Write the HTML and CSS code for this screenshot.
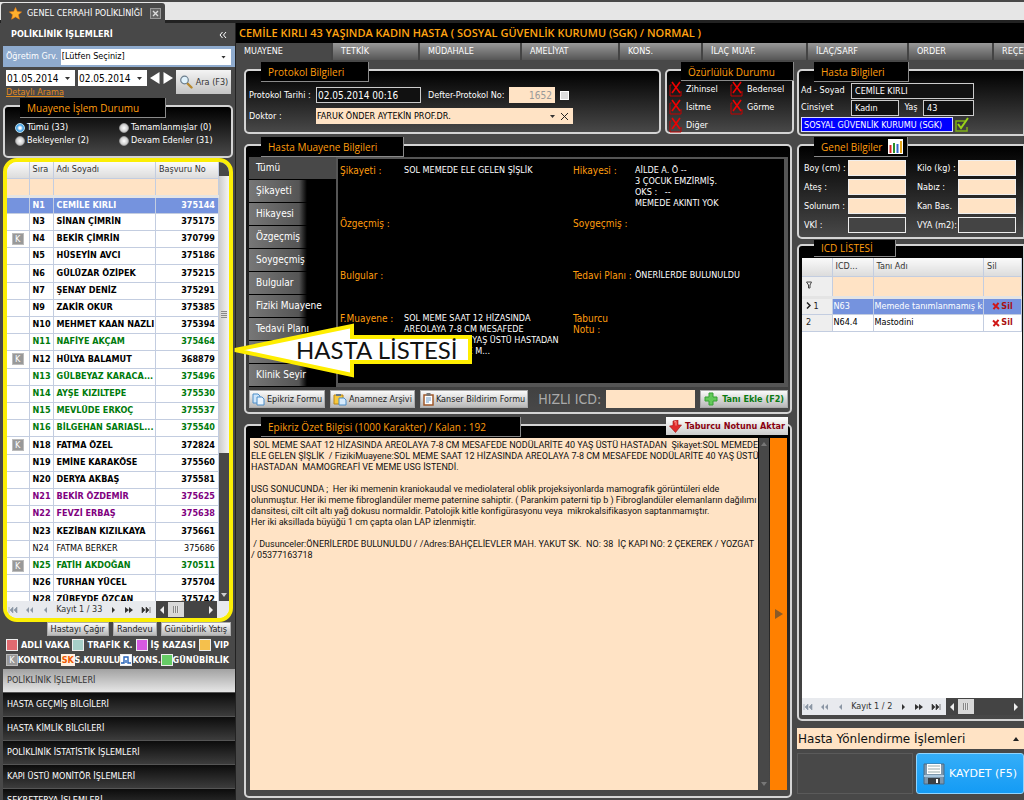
FILE: index.html
```html
<!DOCTYPE html>
<html lang="tr">
<head>
<meta charset="utf-8">
<title>Genel Cerrahi Polikliniği</title>
<link rel="stylesheet" href="styles.css">
</head>
<body>
<svg class="defs" width="0" height="0" aria-hidden="true">
  <symbol id="nofill" viewBox="0 0 14 16"><path d="M2.500 4H1v11h11v-5" fill="none" stroke="#c40000" stroke-width="1"/><path d="M3 1l8 11M11 1L3 12" stroke="#f00000" stroke-width="1.600" fill="none"/></symbol>
  <symbol id="first" viewBox="0 0 10 8"><path d="M1 1v6M5 1L2 4l3 3zM9 1L6 4l3 3z" fill="currentColor" stroke="currentColor" stroke-width=".6"/></symbol>
  <symbol id="prevs" viewBox="0 0 10 8"><path d="M5 1L2 4l3 3zM9 1L6 4l3 3z" fill="currentColor"/></symbol>
  <symbol id="prev" viewBox="0 0 10 8"><path d="M6 1L3 4l3 3z" fill="currentColor"/></symbol>
  <symbol id="next" viewBox="0 0 10 8"><path d="M4 1l3 3-3 3z" fill="currentColor"/></symbol>
  <symbol id="nexts" viewBox="0 0 10 8"><path d="M1 1l4 3-4 3zM5 1l4 3-4 3z" fill="currentColor"/></symbol>
  <symbol id="last" viewBox="0 0 10 8"><path d="M9 1v6M1 1l3 3-3 3zM5 1l3 3-3 3z" fill="currentColor" stroke="currentColor" stroke-width=".6"/></symbol>
  <symbol id="left" viewBox="0 0 6 8"><path d="M5 0v8L1 4z" fill="currentColor"/></symbol>
  <symbol id="rightw" viewBox="0 0 6 8"><path d="M1 0v8l4-4z" fill="currentColor"/></symbol>
  <symbol id="del" viewBox="0 0 8 8"><path d="M1 1.500l6 5.500M6.500 .8L1.500 7.200" stroke="#d01818" stroke-width="2" fill="none"/></symbol>
</svg>
<div class="app">
  <header class="doc-tabs">
    <div class="doc-tab">
      <svg width="13" height="13" viewBox="0 0 13 13"><path d="M6.500.5l1.800 4 4.300.4-3.200 2.900 1 4.400-3.900-2.300-3.900 2.300 1-4.400L.4 4.900l4.300-.4z" fill="#ffb02e" stroke="#f08010" stroke-width=".6"/></svg>
      <span>GENEL CERRAHİ POLİKLİNİĞİ</span>
      <button class="close" aria-label="Kapat"><svg width="7" height="7" viewBox="0 0 7 7"><path d="M1 1l5 5M6 1L1 6" stroke="#ddd" stroke-width="1.400"/></svg></button>
    </div>
  </header>

  <aside class="side">
    <div class="side-head"><h1>POLİKLİNİK İŞLEMLERİ</h1><button class="plain" aria-label="Daralt"><svg width="8" height="8" viewBox="0 0 8 8"><path d="M3.500 1L1 4l2.500 3M7 1L4.500 4 7 7" stroke="#fff" fill="none"/></svg></button></div>
    <div class="group-row"><label for="grp">Öğretim Grv.</label><span class="combo grow"><select id="grp" class="sel"><option>[Lütfen Seçiniz]</option></select></span></div>
    <div class="dates">
      <div class="date-left">
        <div class="date-row">
          <span class="combo small"><select class="sel" aria-label="Başlangıç"><option>01.05.2014</option></select></span>
          <span class="combo small"><select class="sel" aria-label="Bitiş"><option>02.05.2014</option></select></span>
          <button class="plain" aria-label="Önceki"><svg width="10" height="12" viewBox="0 0 10 12"><path d="M9.500 0v12L0 6z" fill="#fff"/></svg></button>
          <button class="plain" aria-label="Sonraki"><svg width="10" height="12" viewBox="0 0 10 12"><path d="M.5 0v12L10 6z" fill="#fff"/></svg></button>
        </div>
        <a class="more" href="#">Detaylı Arama</a>
      </div>
      <button class="search"><svg width="14" height="14" viewBox="0 0 14 14"><path d="M8 8l4.500 4.500" stroke="#b88a30" stroke-width="2.400" stroke-linecap="round"/><circle cx="5.500" cy="5" r="3.800" fill="#dff1fb" stroke="#6d7f8e" stroke-width="1.200"/></svg>Ara (F3)</button>
    </div>
    <section class="frame status">
      <h2 class="cap">Muayene İşlem Durumu</h2>
      <div class="radios">
        <label><input type="radio" name="st" checked>Tümü (33)</label>
        <label><input type="radio" name="st">Tamamlanmışlar (0)</label>
        <label><input type="radio" name="st">Bekleyenler (2)</label>
        <label><input type="radio" name="st">Devam Edenler (31)</label>
      </div>
    </section>
    <section class="patients">
      <div class="list">
        <div class="list-scroll">
        <table class="grid">
          <colgroup><col class="c-k"><col class="c-s"><col><col class="c-b"></colgroup>
          <thead>
            <tr><th></th><th>Sıra</th><th>Adı Soyadı</th><th>Başvuru No</th></tr>
            <tr class="filter"><td></td><td></td><td></td><td></td></tr>
          </thead>
          <tbody>
            <tr class="on"><td></td><td>N1</td><td>CEMİLE KIRLI</td><td>375144</td></tr>
            <tr><td></td><td>N3</td><td>SİNAN ÇİMRİN</td><td>375175</td></tr>
            <tr><td><i class="k">K</i></td><td>N4</td><td>BEKİR ÇİMRİN</td><td>370799</td></tr>
            <tr><td></td><td>N5</td><td>HÜSEYİN AVCI</td><td>375186</td></tr>
            <tr><td></td><td>N6</td><td>GÜLÜZAR ÖZİPEK</td><td>375215</td></tr>
            <tr><td></td><td>N7</td><td>ŞENAY DENİZ</td><td>375291</td></tr>
            <tr><td></td><td>N9</td><td>ZAKİR OKUR</td><td>375385</td></tr>
            <tr><td></td><td>N10</td><td>MEHMET KAAN NAZLI</td><td>375394</td></tr>
            <tr class="g"><td></td><td>N11</td><td>NAFİYE AKÇAM</td><td>375464</td></tr>
            <tr><td><i class="k">K</i></td><td>N12</td><td>HÜLYA BALAMUT</td><td>368879</td></tr>
            <tr class="g"><td></td><td>N13</td><td>GÜLBEYAZ KARACA...</td><td>375496</td></tr>
            <tr class="g"><td></td><td>N14</td><td>AYŞE KIZILTEPE</td><td>375530</td></tr>
            <tr class="g"><td></td><td>N15</td><td>MEVLÜDE ERKOÇ</td><td>375537</td></tr>
            <tr class="g"><td></td><td>N16</td><td>BİLGEHAN SARIASL...</td><td>375540</td></tr>
            <tr><td><i class="k">K</i></td><td>N18</td><td>FATMA ÖZEL</td><td>372824</td></tr>
            <tr><td></td><td>N19</td><td>EMİNE KARAKÖSE</td><td>375560</td></tr>
            <tr><td></td><td>N20</td><td>DERYA AKBAŞ</td><td>375581</td></tr>
            <tr class="p"><td></td><td>N21</td><td>BEKİR ÖZDEMİR</td><td>375625</td></tr>
            <tr class="p"><td></td><td>N22</td><td>FEVZİ ERBAŞ</td><td>375638</td></tr>
            <tr><td></td><td>N23</td><td>KEZİBAN KIZILKAYA</td><td>375661</td></tr>
            <tr class="thin"><td></td><td>N24</td><td>FATMA BERKER</td><td>375686</td></tr>
            <tr class="g"><td><i class="k">K</i></td><td>N25</td><td>FATİH AKDOĞAN</td><td>370511</td></tr>
            <tr><td></td><td>N26</td><td>TURHAN YÜCEL</td><td>375704</td></tr>
            <tr><td></td><td>N28</td><td>ZÜBEYDE ÖZCAN</td><td>375742</td></tr>
          </tbody>
        </table>
        </div>
        <div class="vbar light"><span class="vthumb"><i class="grip"></i></span><i class="down"></i></div>
      </div>
      <div class="pager">
        <svg class="dim"><use href="#first"/></svg><svg class="dim"><use href="#prevs"/></svg><svg class="dim"><use href="#prev"/></svg>
        <span>Kayıt 1 / 33</span>
        <svg><use href="#next"/></svg><svg><use href="#nexts"/></svg><svg><use href="#last"/></svg>
        <div class="hbar"><svg><use href="#left"/></svg><b></b><svg class="end"><use href="#rightw"/></svg></div>
      </div>
    </section>
    <div class="side-btns"><button>Hastayı Çağır</button><button>Randevu</button><button>Günübirlik Yatış</button></div>
    <div class="keys">
      <div><i class="sw red"></i>ADLİ VAKA<i class="sw teal"></i>TRAFİK K.<i class="sw pink"></i>İŞ KAZASI<i class="sw gold"></i>VIP</div>
      <div><i class="k">K</i>KONTROL<i class="sk">SK</i>S.KURULU<i class="sw cons"><svg width="10" height="10" viewBox="0 0 10 10"><path d="M0 8h3V2h4v6h3M5 5v3" fill="none" stroke="#2462b8" stroke-width="1.400"/></svg></i>KONS.<i class="sw green"></i>GÜNÜBİRLİK</div>
    </div>
    <nav class="menu">
      <a class="on" href="#">POLİKLİNİK İŞLEMLERİ</a><a href="#">HASTA GEÇMİŞ BİLGİLERİ</a><a href="#">HASTA KİMLİK BİLGİLERİ</a><a href="#">POLİKLİNİK İSTATİSTİK İŞLEMLERİ</a><a href="#">KAPI ÜSTÜ MONİTÖR İŞLEMLERİ</a><a href="#">SEKRETERYA İŞLEMLERİ</a>
    </nav>
  </aside>

  <main class="main">
    <h1 class="title">CEMİLE KIRLI 43 YAŞINDA KADIN HASTA ( SOSYAL GÜVENLİK KURUMU (SGK) / NORMAL )</h1>
    <nav class="tabs"><a class="on" href="#">MUAYENE</a><a href="#">TETKİK</a><a href="#">MÜDAHALE</a><a href="#">AMELİYAT</a><a href="#">KONS.</a><a href="#">İLAÇ MUAF.</a><a href="#">İLAÇ/SARF</a><a href="#">ORDER</a><a href="#">REÇETE</a></nav>
    <div class="cols">
      <div class="center">
        <div class="top-row">
          <section class="frame protocol">
            <h2 class="cap">Protokol Bilgileri</h2>
            <div class="prow"><label for="pt">Protokol Tarihi :</label><input id="pt" class="dark pt" value="02.05.2014 00:16"><label for="pn" class="pn-l">Defter-Protokol No:</label><input id="pn" class="peach pn" value="1652"><input type="checkbox" class="chk" aria-label="Defter"></div>
            <div class="prow"><label for="dr">Doktor :</label><span class="combo doctor"><select id="dr" class="sel peach"><option>FARUK ÖNDER AYTEKİN PROF.DR.</option></select><svg class="x" width="7" height="7" viewBox="0 0 7 7"><path d="M0 0l7 7M7 0L0 7" stroke="#222"/></svg></span></div>
          </section>
          <section class="frame disab">
            <h2 class="cap">Özürlülük Durumu</h2>
            <ul>
              <li><svg><use href="#nofill"/></svg>Zihinsel</li><li><svg><use href="#nofill"/></svg>Bedensel</li>
              <li><svg><use href="#nofill"/></svg>İsitme</li><li><svg><use href="#nofill"/></svg>Görme</li>
              <li><svg><use href="#nofill"/></svg>Diğer</li>
            </ul>
          </section>
        </div>
        <section class="frame exam">
          <h2 class="cap">Hasta Muayene Bilgileri</h2>
          <div class="exam-body">
            <nav class="vtabs"><a class="on" href="#">Tümü</a><a href="#">Şikayeti</a><a href="#">Hikayesi</a><a href="#">Özgeçmiş</a><a href="#">Soygeçmiş</a><a href="#">Bulgular</a><a href="#">Fiziki Muayene</a><a href="#">Tedavi Planı</a><a href="#" aria-label="Taburcu Notu"></a><a href="#">Klinik Seyir</a></nav>
            <dl class="facts">
              <dt>Şikayeti :</dt><dd>SOL MEMEDE ELE GELEN ŞİŞLİK</dd><dt>Hikayesi :</dt><dd>AİLDE A. Ö --<br>3 ÇOCUK EMZİRMİŞ.<br>OKS :&nbsp;&nbsp; --<br>MEMEDE AKINTI YOK</dd>
              <dt>Özgeçmiş :</dt><dd></dd><dt>Soygeçmiş :</dt><dd></dd>
              <dt>Bulgular :</dt><dd></dd><dt>Tedavi Planı :</dt><dd>ÖNERİLERDE BULUNULDU</dd>
              <dt>F.Muayene :</dt><dd>SOL MEME SAAT 12 HİZASINDA<br>AREOLAYA 7-8 CM MESAFEDE<br>NODÜLARİTE 40 YAŞ ÜSTÜ HASTADAN<br>MAMOGREAFİ VE M...</dd><dt>Taburcu<br>Notu :</dt><dd></dd>
            </dl>
          </div>
          <div class="exam-foot">
            <button><svg width="13" height="13" viewBox="0 0 13 13"><path d="M1 1h5l2 2v7H1z" fill="#cfe6fa" stroke="#4d8ec9"/><path d="M5 4h5l2 2v6H5z" fill="#eaf5ff" stroke="#4d8ec9"/></svg>Epikriz Formu</button>
            <button><svg width="14" height="13" viewBox="0 0 14 13"><path d="M1 2h9v9H1z" fill="#f6c83c" stroke="#b88416"/><path d="M3 1h5v2H3z" fill="#678"/><path d="M6 5h5l2 2v5H6z" fill="#d5eafc" stroke="#4d8ec9"/></svg>Anamnez Arşivi</button>
            <button><svg width="11" height="13" viewBox="0 0 11 13"><path d="M1 2h9v10H1z" fill="#fff" stroke="#a05a2c" stroke-width="1.500"/><path d="M3.500 0h4v3h-4z" fill="#777"/><path d="M3 5h5M3 7h5M3 9h3" stroke="#6c9ac8"/></svg>Kanser Bildirim Formu</button>
            <label class="fast" for="icd">HIZLI ICD:</label><input id="icd" class="peach icd">
            <button class="add"><svg width="14" height="14" viewBox="0 0 14 14"><path d="M5 1h4v4h4v4H9v4H5V9H1V5h4z" fill="#63c95a" stroke="#37a035"/></svg>Tanı Ekle (F2)</button>
          </div>
        </section>
        <section class="frame epi">
          <h2 class="cap">Epikriz Özet Bilgisi (1000 Karakter) / Kalan : 192</h2>
          <button class="xfer"><svg width="13" height="13" viewBox="0 0 13 13"><path d="M4 1l5-1v5h3.500L6.500 12.500.5 6l3.500-.5z" fill="#e02a2a" stroke="#9c1010" stroke-width=".6"/><path d="M5 2l2-.5v4" fill="none" stroke="#ff9a90"/></svg>Taburcu Notunu Aktar</button>
          <textarea class="note" aria-label="Epikriz özeti"> SOL MEME SAAT 12 HİZASINDA AREOLAYA 7-8 CM MESAFEDE NODÜLARİTE 40 YAŞ ÜSTÜ HASTADAN  Şikayet:SOL MEMEDE
ELE GELEN ŞİŞLİK  / FizikiMuayene:SOL MEME SAAT 12 HİZASINDA AREOLAYA 7-8 CM MESAFEDE NODÜLARİTE 40 YAŞ ÜSTÜ
HASTADAN  MAMOGREAFİ VE MEME USG İSTENDİ.

USG SONUCUNDA ;  Her iki memenin kraniokaudal ve mediolateral oblik projeksiyonlarda mamografik görüntüleri elde
olunmuştur. Her iki meme fibroglandüler meme paternine sahiptir. ( Parankim paterni tip b ) Fibroglandüler elemanların dağılımı
dansitesi, cilt cilt altı yağ dokusu normaldir. Patolojik kitle konfigürasyonu veya  mikrokalsifikasyon saptanmamıştır.
Her iki aksillada büyüğü 1 cm çapta olan LAP izlenmiştir.

 / Dusunceler:ÖNERİLERDE BULUNULDU / /Adres:BAHÇELİEVLER MAH. YAKUT SK.  NO: 38  İÇ KAPI NO: 2 ÇEKEREK / YOZGAT
/ 05377163718</textarea>
          <div class="vbar off"><i class="up"></i><i class="down"></i></div>
          <button class="expand" aria-label="Genişlet"><svg width="8" height="10" viewBox="0 0 8 10"><path d="M0 0l8 5-8 5z" fill="#8a5a28"/></svg></button>
        </section>
      </div>

      <div class="right">
        <section class="frame person">
          <h2 class="cap">Hasta Bilgileri</h2>
          <div class="rline"><label for="ad">Ad - Soyad</label><input id="ad" class="dark ad" value="CEMİLE KIRLI"></div>
          <div class="rline"><label for="cn">Cinsiyet</label><input id="cn" class="dark cn" value="Kadın"><label for="ys" class="ys-l">Yaş</label><input id="ys" class="dark ys" value="43"></div>
          <div class="rline"><input class="sgk" aria-label="Kurum" value="SOSYAL GÜVENLİK KURUMU (SGK)"><svg width="20" height="16" viewBox="0 0 20 16"><path d="M12 4H3v10h11v-4" fill="none" stroke="#7fae14" stroke-width="1.500"/><path d="M5 7l3 4 7-10" fill="none" stroke="#9ad418" stroke-width="2"/></svg></div>
        </section>
        <section class="frame vitals">
          <h2 class="cap">Genel Bilgiler <svg width="15" height="15" viewBox="0 0 15 15"><path d="M0 0h15v15H0z" fill="#fff"/><path d="M1.500 6h2v8h-2z" fill="#d22"/><path d="M5 4h2v10H5z" fill="#2a8f2a"/><path d="M8.500 5h2v9h-2z" fill="#36c"/><path d="M12 2h2v12h-2z" fill="#e8a81c"/></svg></h2>
          <div class="vgrid">
            <label for="v1">Boy (cm) :</label><input id="v1" class="peach"><label for="v2">Kilo (kg) :</label><input id="v2" class="peach">
            <label for="v3">Ateş :</label><input id="v3" class="peach"><label for="v4">Nabız :</label><input id="v4" class="peach">
            <label for="v5">Solunum :</label><input id="v5" class="peach"><label for="v6">Kan Bas.</label><input id="v6" class="peach">
            <label for="v7">VKİ :</label><input id="v7" class="ro" readonly><label for="v8">VYA (m2):</label><input id="v8" class="ro" readonly>
          </div>
        </section>
        <section class="frame icds">
          <h2 class="cap">ICD LİSTESİ</h2>
          <div class="icd-box">
            <table class="grid icd-grid">
              <colgroup><col class="i-n"><col class="i-c"><col><col class="i-s"></colgroup>
              <thead>
                <tr><th></th><th>ICD...</th><th>Tanı Adı</th><th>Sil</th></tr>
                <tr class="filter"><td><svg width="6" height="8" viewBox="0 0 6 8"><path d="M.5 1h5L4 4v3H2.500V4z" fill="none" stroke="#444"/></svg></td><td></td><td></td><td></td></tr>
              </thead>
              <tbody>
                <tr class="on"><td><svg width="5" height="7" viewBox="0 0 5 7"><path d="M1 .5l3 3-3 3" fill="none" stroke="#222" stroke-width="1.500"/></svg> 1</td><td>N63</td><td>Memede tanımlanmamış kitle</td><td><button class="plain sil"><svg width="8" height="8"><use href="#del"/></svg>Sil</button></td></tr>
                <tr><td>2</td><td>N64.4</td><td>Mastodini</td><td><button class="plain sil"><svg width="8" height="8"><use href="#del"/></svg>Sil</button></td></tr>
              </tbody>
            </table>
            <div class="pager">
              <svg class="dim"><use href="#first"/></svg><svg class="dim"><use href="#prevs"/></svg><svg class="dim"><use href="#prev"/></svg>
              <span>Kayıt 1 / 2</span>
              <svg><use href="#next"/></svg><svg><use href="#nexts"/></svg><svg><use href="#last"/></svg>
              <div class="hbar"><svg><use href="#left"/></svg><b></b><svg class="end"><use href="#rightw"/></svg></div>
            </div>
          </div>
        </section>
        <button class="route">Hasta Yönlendirme İşlemleri<svg width="6" height="4" viewBox="0 0 6 4"><path d="M0 4l3-4 3 4z" fill="#222"/></svg></button>
        <div class="save-row"><div class="blank"></div>
          <button class="save"><svg width="22" height="24" viewBox="0 0 22 24"><path d="M1 2h20v20H1z" fill="#7d97ad" stroke="#4b6a86"/><path d="M4 2h14v10H4z" fill="#fff"/><path d="M5 4h12M5 7h12M5 10h12" stroke="#9aa"/><path d="M1 13h20v2H1z" fill="#a9c6de"/><path d="M5 16h12v6H5z" fill="#3a3f45"/><path d="M13 17h2v4h-2z" fill="#fff"/></svg>KAYDET (F5)</button>
        </div>
      </div>
    </div>
  </main>
</div>
<svg class="callout" width="244" height="58" viewBox="0 0 244 58"><path d="M5 28L122 4v11h118v25H122v13z" fill="#fff" stroke="#ffee00" stroke-width="4"/><text x="66" y="37">HASTA LİSTESİ</text></svg>
</body>
</html>
```
FILE: styles.css
```css
* { box-sizing: border-box; }
body { margin: 0; background: #484848; color: #fff; font: 9px/11px "DejaVu Sans Condensed", "DejaVu Sans", sans-serif; overflow: hidden; }
button, input, select, textarea { font: inherit; color: inherit; margin: 0; padding: 0; border: 0; border-radius: 0; }
h1, h2, ul, dl, dd { margin: 0; padding: 0; font: inherit; }
a { color: inherit; text-decoration: none; }
i { font-style: normal; }
button { white-space: nowrap; display: inline-flex; align-items: center; justify-content: center; }
svg { flex: none; }
.plain { background: none; }
.defs { position: absolute; }

.app { display: grid; grid-template: 23px minmax(0, 1fr) / 236px minmax(0, 1fr); height: 100vh; }
.doc-tabs { grid-column: 1 / -1; background: linear-gradient(#484848 2px, #e6e6e6 2px 20px, #222 20px); display: flex; padding: 3px 0 0 1px; }
.doc-tab { display: flex; align-items: center; width: 164px; padding-left: 8px; gap: 5px; background: #484848; border-radius: 3px 3px 0 0; white-space: nowrap; }
.doc-tab span { flex: 1; }
.close { width: 11px; height: 11px; margin-right: 4px; background: #666; border: 1px solid #999; }

/* left panel */
.side { display: flex; flex-direction: column; padding-left: 3px; min-height: 0; border-right: 1px solid #222; overflow: hidden; }
.side-head { display: flex; justify-content: space-between; align-items: center; height: 23px; padding: 0 8px; flex: none; }
.side-head h1 { font-weight: bold; font-size: 9px; }
.group-row { display: flex; align-items: center; height: 21px; background: #8fabce; padding: 0 4px 0 3px; gap: 3px; flex: none; white-space: nowrap; }
.combo { position: relative; display: flex; color: #000; }
.combo::after { content: ""; position: absolute; right: 5px; top: 50%; width: 5px; height: 3px; margin-top: -1px; background: #333; clip-path: polygon(0 0, 100% 0, 50% 100%); pointer-events: none; }
.sel { appearance: none; width: 100%; height: 16px; background: #fff; padding-left: 1px; color: #000; }
.grow { flex: 1; }
.small { width: 69px; font-size: 10px; }
.dates { display: flex; justify-content: space-between; padding: 3px 4px 0 3px; height: 35px; flex: none; }
.date-left { display: flex; flex-direction: column; }
.date-row { display: flex; gap: 3px; align-items: center; }
.more { color: #e08a20; text-decoration: underline; font-size: 9px; line-height: 12px; }
.search { width: 55px; height: 24px; gap: 3px; background: linear-gradient(#f4f4f4, #c4c4c4); color: #333; }
.frame { position: relative; border: 2px solid #d4d4d4; border-radius: 5px; background: linear-gradient(#000, #484848); }
.cap { position: absolute; left: 15px; top: -9px; height: 20px; line-height: 20px; padding-left: 7px; background: #000; border: solid #8a8a8a; border-width: 0 1px 1px 0; color: #ff9d0e; font-family: "Open Sans", "Noto Sans", sans-serif; font-size: 10px; white-space: nowrap; z-index: 1; }
.status { height: 53px; margin: 3px 2px 0 0; padding: 15px 4px 0 10px; flex: none; }
.status .cap { width: 146px; }
.radios { display: grid; grid-template-columns: 104px 1fr; row-gap: 2px; white-space: nowrap; }
.radios label { display: flex; align-items: center; gap: 2px; }
.radios input { appearance: none; width: 10px; height: 10px; border-radius: 50%; background: radial-gradient(#fff, #b4b4b4); border: 1px solid #999; }
.radios input:checked { background: radial-gradient(#fff 1px, #4ba5e6 3px); border-color: #bde; }

.patients { border: 4px solid #fbee05; border-radius: 14px; height: 464px; margin: 0 2px 0 0; background: #fff; overflow: hidden; display: flex; flex-direction: column; flex: none; }
.list { display: flex; flex: 1; min-height: 0; }
.list-scroll { flex: 1; overflow: hidden; }
.grid { border-collapse: collapse; table-layout: fixed; width: 100%; color: #000; }
.grid th { height: 16px; font-weight: normal; text-align: left; color: #333; background: linear-gradient(#fafafa, #dcdcdc); }
.grid th, .grid td { padding: 0 3px; border: solid #c3cde0; border-width: 0 1px 1px 0; white-space: nowrap; overflow: hidden; }
.grid .filter td { height: 18px; background: #ffe3c5; border-bottom: 3px solid #e4e4e4; }
.c-k { width: 22px; } .c-s { width: 24px; } .c-b { width: 63px; }
.grid tbody tr { height: 17px; font-weight: bold; }
.list tbody tr:nth-child(5n) { height: 18px; }
.list tbody td:last-child { text-align: right; }
.grid td:first-child { text-align: center; }
.grid tbody .thin { font-weight: normal; }
.grid .g { color: #007a0c; }
.grid .p { color: #800080; }
.grid .on td { background: #7593de; color: #fff; }
.k { display: inline-block; width: 12px; height: 12px; line-height: 10px; text-align: center; background: #999; border: 1px solid #bbb; color: #fff; font-weight: normal; vertical-align: middle; }
.vbar { width: 10px; background: #484848; display: flex; flex-direction: column; }
.light { padding-top: 14px; }
.vthumb { height: 277px; background: linear-gradient(90deg, #ccc, #f5f5f5); display: flex; align-items: center; justify-content: center; }
.grip { width: 6px; height: 7px; background: repeating-linear-gradient(#888 0 1px, #ddd 1px 2px); }
.down, .up { width: 6px; height: 4px; background: #ccc; clip-path: polygon(0 0, 100% 0, 50% 100%); margin: auto auto 4px; }
.up { clip-path: polygon(0 100%, 100% 100%, 50% 0); margin: 4px auto 0; }
.pager { display: flex; align-items: center; justify-content: space-between; height: 17px; background: #e8eaee; color: #333; flex: none; }
.pager svg { width: 12px; height: 8px; }
.pager .dim { color: #8c97a5; }
.hbar { align-self: stretch; display: flex; align-items: center; width: 61px; background: #444; color: #eee; }
.hbar b { width: 16px; height: 15px; background: repeating-linear-gradient(90deg, #888 0 1px, #e4e4e4 1px 2px) center / 6px 7px no-repeat #d8d8d8; }
.hbar .end { margin-left: auto; }
.patients .pager { padding-right: 12px; }
.side-btns { display: flex; justify-content: flex-end; gap: 4px; padding-right: 4px; flex: none; }
.side-btns button { height: 14px; padding: 0 3px; }
.side-btns button, .exam-foot button { background: linear-gradient(#fafafa, #b8b8b8); color: #222; border: 1px solid #aaa; }
.keys { display: flex; flex-direction: column; gap: 3px; padding: 3px 3px 3px; font-weight: bold; line-height: 12px; white-space: nowrap; flex: none; }
.keys div { display: flex; justify-content: space-between; align-items: center; padding-right: 3px; }
.sw { width: 12px; height: 12px; border: 1px solid #eee; }
.red { background: #e06a70; } .teal { background: #a6cfc8; } .pink { background: #d65ae0; } .gold { background: #f5c04c; } .green { background: #66cc66; } .cons { background: #fff; display: flex; }
.sk { width: 14px; background: #fff0e0; color: #f05a00; text-align: center; }
.menu { display: flex; flex-direction: column; }
.menu a { height: 24px; line-height: 22px; padding-left: 4px; background: linear-gradient(#0c0c0c, #3c3c3c); border-bottom: 1px solid #555; flex: none; }
.menu .on { background: linear-gradient(#a2a2a2, #e6e6e6); color: #333; }

/* patient record */
.main { display: flex; flex-direction: column; min-width: 0; min-height: 0; overflow: hidden; }
.title { height: 20px; padding-left: 3px; background: #000; color: #ffa412; font: 600 11px/19px "Open Sans", sans-serif; white-space: nowrap; flex: none; }
.tabs { display: grid; grid-template-columns: 97px 87px 102px 98px 83px 105px 101px 85px 80px; height: 17px; overflow: hidden; flex: none; }
.tabs a { line-height: 16px; padding-left: 8px; background: linear-gradient(#999, #555); border-right: 2px solid #444; }
.tabs .on { background: #484848; }
.cols { flex: 1; min-height: 0; display: grid; grid-template-columns: minmax(0, 1fr) 227px; gap: 5px; padding: 9px 0 2px 8px; }
.center { display: flex; flex-direction: column; gap: 10px; min-width: 0; min-height: 0; }
.top-row { display: flex; gap: 4px; height: 65px; margin-right: -2px; flex: none; }
.protocol { flex: 1; padding: 16px 4px 0 3px; display: flex; flex-direction: column; gap: 5px; }
.protocol .cap { width: 108px; }
.prow { display: flex; align-items: center; height: 16px; }
.prow label:first-child { width: 67px; white-space: nowrap; }
.dark { background: #111; border: 1px solid #ccc; color: #fff; height: 16px; padding-left: 3px; min-width: 0; }
.peach { background: #ffe3c5; color: #000; height: 16px; }
.pt { width: 105px; font-size: 10px; padding-left: 1px; }
.pn-l { margin-left: 7px; width: 81px; white-space: nowrap; }
.pn { width: 46px; text-align: right; padding-right: 3px; color: #999; font-size: 10px; }
.chk { appearance: none; width: 9px; height: 9px; margin-left: 5px; background: #ddd; border: 1px solid #fff; }
.doctor { width: 257px; }
.doctor::after { right: 18px; }
.doctor .x { position: absolute; right: 5px; top: 5px; }
.disab { width: 129px; padding: 9px 0 0 2px; }
.disab .cap { width: 113px; right: -2px; left: auto; height: 19px; }
.disab ul { display: grid; grid-template-columns: 61px 1fr; list-style: none; }
.disab li { display: flex; align-items: center; gap: 3px; height: 18px; }
.disab svg { width: 14px; height: 16px; }

.exam { height: 270px; padding: 11px 2px 0 3px; flex: none; }
.exam .cap { width: 143px; }
.exam-body { display: grid; grid-template-columns: 87px 1fr; height: 230px; background: #000; }
.vtabs { display: flex; flex-direction: column; font-size: 10px; gap: 1px; white-space: nowrap; }
.vtabs a { height: 22px; line-height: 22px; padding-left: 7px; background: linear-gradient(90deg, #777, #555 50px, #000 58px); flex: none; }
.vtabs .on { background: #484848; }
.facts { display: grid; grid-template-columns: 64px 1fr 62px 149px; grid-template-rows: 53px 52px 43px 1fr; padding: 6px 0 0 2px; border: solid #555; border-width: 2px 4px 4px 2px; white-space: nowrap; }
.facts dt { color: #ff9d0e; font-size: 10px; }
.exam-foot { display: flex; align-items: center; gap: 5px; padding-top: 3px; }
.exam-foot button { height: 18px; padding: 0 2px; gap: 2px; }
.fast { font-size: 14px; color: #aaa; line-height: 18px; margin-left: 5px; white-space: nowrap; }
.icd { flex: 1; min-width: 0; height: 18px; }
.exam-foot .add { color: #0a7a12; font-weight: bold; padding: 0 3px; gap: 4px; }

.epi { flex: 1; min-height: 0; display: flex; padding: 12px 3px 6px 4px; gap: 1px; }
.epi .cap { width: 260px; }
.xfer { position: absolute; right: 2px; top: -9px; height: 18px; padding: 0 3px; gap: 3px; background: linear-gradient(#fff, #ccc); color: #8a0010; font-weight: bold; z-index: 1; }
.note { flex: 1; min-width: 0; resize: none; background: #ffe3c5; color: #111; padding: 2px 0 0 1px; font: 9px/11px Roboto, sans-serif; white-space: pre; overflow: hidden; }
.off i { background: #777; }
.expand { width: 17px; background: #ff8000; }

.right { display: flex; flex-direction: column; min-height: 0; min-width: 0; }
.right .frame { border-right-width: 1px; border-radius: 5px 0 0 5px; }
.person { height: 67px; padding: 11px 0 0 2px; margin-bottom: 8px; flex: none; }
.person .cap { width: 95px; }
.rline { display: flex; align-items: center; height: 17px; }
.rline label:first-child { width: 50px; }
.ad { width: 123px; } .cn { width: 48px; } .ys { width: 51px; }
.ys-l { width: 24px; text-align: center; }
.sgk { width: 152px; height: 15px; background: #00f; border: 1px solid #ddf; padding-left: 2px; color: #fff; }
.vitals { height: 95px; padding: 14px 0 0 5px; margin-bottom: 5px; flex: none; }
.vitals .cap, .icds .cap { display: flex; align-items: center; gap: 6px; width: 94px; }
.vgrid { display: grid; grid-template-columns: 44px 69px 41px 58px; row-gap: 3px; align-items: center; white-space: nowrap; }
.vgrid input { width: 58px; height: 16px; border: 1px solid #eee; }
.vgrid .ro { background: #444; }
.icds { flex: 1; min-height: 0; padding: 12px 1px 4px 3px; display: flex; }
.icds .cap { top: -6px; height: 17px; width: 82px; }
.icd-box { flex: 1; min-width: 0; background: #fff; display: flex; flex-direction: column; justify-content: space-between; }
.icd-grid th { height: 18px; }
.icd-grid .filter td { height: 21px; }
.icd-grid tbody tr { font-weight: normal; }
.icd-grid tbody td { padding: 0 1px; }
.icd-grid td:first-child, .icd-grid tbody .on td:first-child { background: #eee; color: #222; text-align: left; padding-left: 4px; }
.i-n { width: 30px; } .i-c { width: 41px; } .i-s { width: 38px; }
.icd-box .hbar { width: 76px; }
.sil { display: flex; color: #a81010; font-weight: bold; width: 100%; justify-content: center; gap: 1px; }
.route { height: 21px; margin-top: 7px; background: #ffe3c5; color: #111; font: 12px/20px "DejaVu Sans", sans-serif; justify-content: space-between; padding: 0 5px 0 1px; flex: none; }
.save-row { display: grid; grid-template-columns: 1fr 108px; gap: 3px; height: 41px; margin: 4px 0 4px; flex: none; }
.blank { border: 1px solid #5a5a5a; }
.save { background: linear-gradient(#35aef8, #149bf5); border: 1px solid #8fd4ff; border-radius: 3px; gap: 4px; font: 11px "DejaVu Sans", sans-serif; }

.callout { position: absolute; left: 230px; top: 322px; z-index: 3; }
.callout text { font: 24px Lato, sans-serif; fill: #111; }
```
